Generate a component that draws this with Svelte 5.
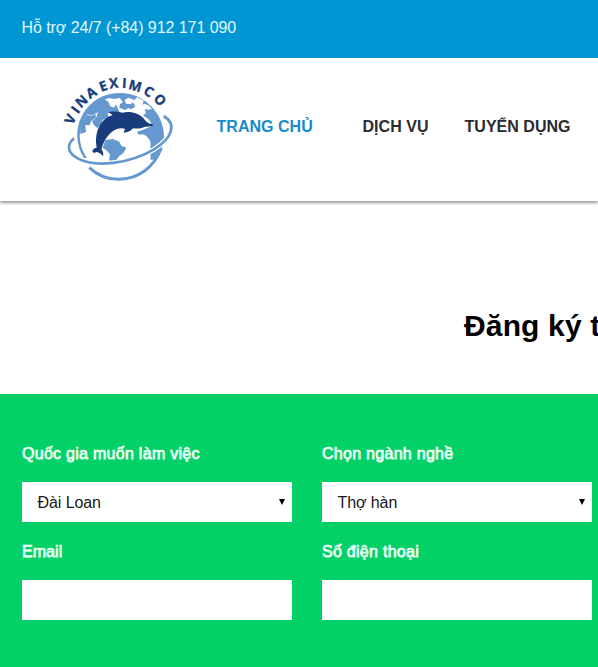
<script>
  const letters = [
    ['V', 46, 163, -65], ['I', 62, 135, -53], ['N', 80, 109, -43], ['A', 109, 83, -32],
    ['E', 145, 64, -20], ['X', 176, 55, -7], ['I', 208, 55, 4], ['M', 241, 63, 16],
    ['C', 281, 80, 32], ['O', 315, 105, 46]
  ];
  const nav = [
    { text: 'TRANG CHỦ', cls: 'home' },
    { text: 'DỊCH VỤ', cls: 'service' },
    { text: 'TUYỂN DỤNG', cls: 'jobs' }
  ];
  const fields = [
    { label: 'Quốc gia muốn làm việc', value: 'Đài Loan', cls: 'country' },
    { label: 'Chọn ngành nghề', value: 'Thợ hàn', cls: 'trade' },
    { label: 'Email', cls: 'email' },
    { label: 'Số điện thoại', cls: 'phone' }
  ];
</script>

<div class="page">
  <div class="topbar"><span>Hỗ trợ 24/7 (+84) 912 171 090</span></div>
  <header>
    <svg class="logo" viewBox="0 0 390 375" role="img" aria-label="VINAEXIMCO">
      <path d="M87 279C59 235 60 174 94 132C122 97 158 84 197 84C267 84 327 145 327 214C325 243 317 263 300 283L287 285L286 247C291 229 279 215 265 208L251 209L246 200L263 195L290 183L287 171C282 163 271 157 264 151L273 144L269 132L280 134L291 132L281 121L267 116L262 121L266 107L246 97L238 105L220 98L209 105L213 116L227 118L234 112L241 126L227 133L220 129L211 135L193 128L195 117L204 112L194 99L178 102L161 99L149 104L160 110L165 123L177 128L183 118L193 141L158 142L160 157L143 165L137 178L127 190L117 180L111 169L124 157L129 142L111 151L97 148C69 181 65 235 96 279Z" fill="#6498cf"/>
      <path d="M96 149L111 153L121 146L123 157L108 169L104 181L91 180L93 201L76 207L75 177Z" fill="#6498cf"/>
      <path d="M151 225L174 222L193 230L199 242L214 248L205 264L192 274L181 290L162 287L165 268L154 256L143 248Z" fill="#6498cf"/>
      <path d="M103 308C129 333 160 344 194 343C247 341 295 312 319 249" fill="none" stroke="#6498cf" stroke-width="9"/>
      <path d="M57 220C34 240 37 263 68 280C120 309 225 296 297 253C351 219 367 178 326 153" fill="none" stroke="#fff" stroke-width="15"/>
      <path d="M57 220C34 240 37 263 68 280C120 309 225 296 297 253C351 219 367 178 326 153" fill="none" stroke="#6498cf" stroke-width="8"/>
      <path d="M157 142Q180 136 202 143C228 137 253 146 267 161Q273 173 292 178L294 183L268 186C256 192 244 191 234 190Q223 203 206 203L210 191Q197 187 184 193C163 202 148 224 141 247L139 253Q147 262 144 274Q134 262 126 261Q116 266 112 260Q113 250 125 248C119 216 127 184 146 166Q160 153 173 151Q166 144 157 142Z" fill="#193d7c"/>
      <g fill="#193d7c" stroke="#193d7c" stroke-width="1" font-family="Open Sans, sans-serif" font-weight="700" font-size="41" text-anchor="middle">
        {#each letters as [char, x, y, angle]}
          <text transform="translate({x} {y}) rotate({angle})" y="14">{char}</text>
        {/each}
      </g>
    </svg>
    <nav>
      {#each nav as item}<a class={item.cls} href="#top">{item.text}</a>{/each}
    </nav>
  </header>
  <main>
    <h1>Đăng ký t</h1>
    <form>
      {#each fields as field}
        <div class="field {field.cls}">
          <div class="label"><span>{field.label}</span></div>
          <div class="control">
            {#if field.value}
              <span class="value">{field.value}</span>
              <svg class="arrow" viewBox="0 0 6 6"><path d="M0 0H6L3 6Z"/></svg>
            {/if}
          </div>
        </div>
      {/each}
    </form>
  </main>
</div>

<style>
  :global(body) { margin: 0; overflow: hidden; }
  .page { width: 598px; height: 667px; overflow: hidden; background: #fff; font-family: "Liberation Sans", Arial, sans-serif; font-size: 16px; color: #000; }
  .topbar { height: 58px; box-sizing: border-box; padding: 18px 21.5px; background: #0096d3; color: #e2f8ff; line-height: 20px; letter-spacing: -.06px; }
  header { display: flex; height: 143px; box-sizing: border-box; padding: 7px 0 0 55px; box-shadow: 0 2px 3px rgba(0,0,0,.4); clip-path: inset(0 0 -8px); }
  .logo { width: 130px; height: 125px; flex: none; }
  nav { display: flex; padding: 52px 0 0 31.5px; line-height: 20px; font-weight: 700; white-space: nowrap; }
  a { color: #2b2b2f; text-decoration: none; flex: none; letter-spacing: .03px; }
  .home { width: 146px; color: #168dca; }
  .service { width: 102px; }
  h1 { margin: 0; height: 193px; box-sizing: border-box; padding: 107px 0 0 464px; font-size: 30px; line-height: 36px; letter-spacing: .15px; white-space: nowrap; }
  form { height: 273px; box-sizing: border-box; padding: 50px 22px 0; display: grid; grid-template-columns: 270px 270px; column-gap: 30px; grid-auto-rows: 98px; align-content: start; background: #03d066; }
  .label { height: 38px; line-height: 20px; color: #e9fff3; letter-spacing: .28px; -webkit-text-stroke: .75px #e9fff3; }
  .email .label { letter-spacing: .05px; }
  .control { display: flex; height: 40px; box-sizing: border-box; align-items: center; justify-content: space-between; padding: 0 7px 0 15.5px; background: #fff; }
  .value { color: #181818; letter-spacing: -.08px; padding-top: 1px; }
  .arrow { width: 6px; height: 6px; }
</style>
